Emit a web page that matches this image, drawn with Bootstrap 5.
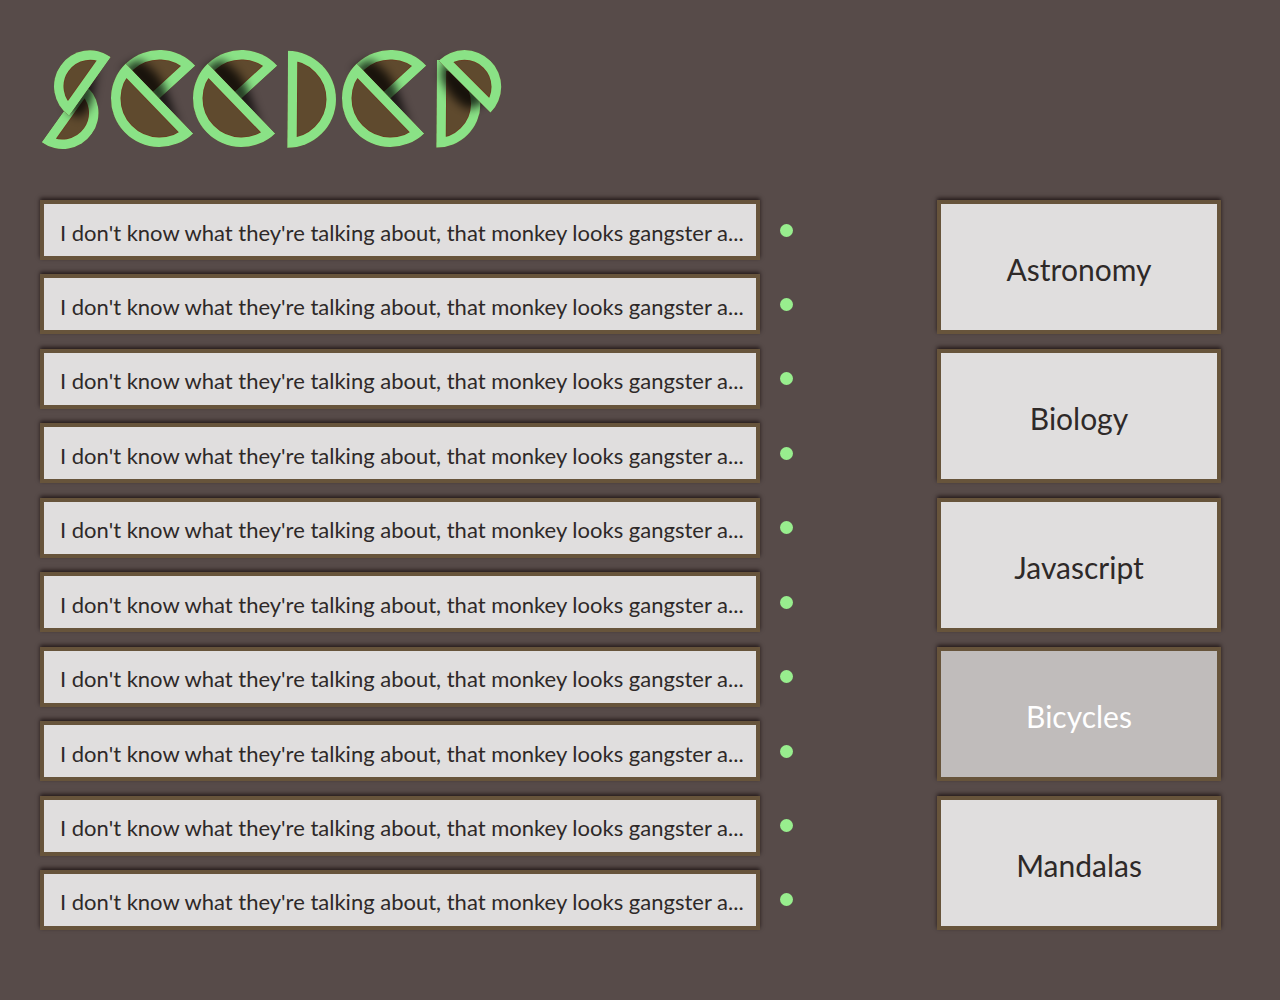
<!DOCTYPE html>
<html lang="en">
<head>
<meta charset="utf-8">
<meta name="viewport" content="width=device-width, initial-scale=1">
<title>Seeder</title>
<link href="https://cdn.jsdelivr.net/npm/bootstrap@5.3.0/dist/css/bootstrap.min.css" rel="stylesheet">
<style>
  body { background: #574b49; color: #2e2928; font-family: Lato, "Gill Sans", sans-serif; }
  .page { padding: 44px 59px 70px 40px; }
  .logo { width: 464px; max-width: 100%; height: auto; }
  .board { display: grid; grid-template-columns: minmax(0, 753fr) 144fr minmax(0, 284fr); margin-top: 46px; }
  .topics { grid-column: 3; gap: 15px; }
  .entry { gap: 20px; }
  .panel { background: #e0dede; border: 4px solid #67543b; color: inherit; box-shadow: 0 -2px 4px rgba(20, 10, 10, .75); }
  .panel:hover { background: #c0bcbb; color: #fff; }
  .headline { height: 60px; padding: 5px 8px 0 16px; font-size: 22px; line-height: 32px; text-decoration: none; min-width: 0; }
  .topic { height: 134px; padding: 4px 8px 0; font-size: 30px; line-height: 40px; }
  .topic.active { background: #c0bcbb; color: #fff; }
  .unread { width: 13px; height: 13px; background: #98ee8e; }
</style>
<script src="https://cdn.jsdelivr.net/npm/bootstrap@5.3.0/dist/js/bootstrap.bundle.min.js"></script>
</head>
<body>
<div class="page">
  <header>
    <a href="#" class="d-block" aria-label="Seeder">
      <svg class="logo d-block" viewBox="40 44 464 110" aria-hidden="true">
        <defs>
          <filter id="soft" x="-50%" y="-100%" width="200%" height="300%"><feGaussianBlur stdDeviation="5"/></filter>
          <path id="bigShape" d="M-48.5 0A48.5 48.5 0 0 1 48.5 0Z"/>
          <path id="midShape" d="M-44 0A44 44 0 0 1 44 0Z"/>
          <path id="smallShape" d="M-36 0A36 36 0 0 1 36 0Z"/>
          <clipPath id="bigClip"><use href="#bigShape"/></clipPath>
          <clipPath id="midClip"><use href="#midShape"/></clipPath>
          <clipPath id="smallClip"><use href="#smallShape"/></clipPath>
          <g id="big" clip-path="url(#bigClip)">
            <use href="#bigShape" fill="#5f4a2e" stroke="#6b3a20" stroke-width="20.5"/>
            <use href="#bigShape" fill="none" stroke="#8ae286" stroke-width="19"/>
          </g>
          <g id="mid" clip-path="url(#midClip)">
            <use href="#midShape" fill="#5f4a2e" stroke="#6b3a20" stroke-width="20.5"/>
            <use href="#midShape" fill="none" stroke="#8ae286" stroke-width="19"/>
          </g>
          <g id="small" clip-path="url(#smallClip)">
            <use href="#smallShape" fill="#5f4a2e" stroke="#6b3a20" stroke-width="20.5"/>
            <use href="#smallShape" fill="none" stroke="#8ae286" stroke-width="19"/>
          </g>
          <g id="letterE">
            <use href="#big" transform="rotate(-42.5)"/>
            <path d="M-36 -6L48 -6L43 12Q22 19 0 10Z" fill="#000" opacity=".74" filter="url(#soft)" transform="rotate(226)"/>
            <use href="#big" transform="rotate(226)"/>
          </g>
        </defs>
        <g transform="translate(62.5 113)"><use href="#small" transform="rotate(125.4)"/></g>
        <g transform="translate(90 86.3)">
          <path d="M-34 -6L22 -6L-4 7Q-20 15 -32 9Z" fill="#000" opacity=".74" filter="url(#soft)" transform="rotate(-54.6)"/>
          <use href="#small" transform="rotate(-54.6)"/>
        </g>
        <use href="#letterE" transform="translate(159.5 98.5)"/>
        <use href="#letterE" transform="translate(241.5 98.5)"/>
        <use href="#big" transform="translate(287.5 99.3) rotate(90.4)"/>
        <use href="#letterE" transform="translate(390.5 98.5)"/>
        <use href="#mid" transform="translate(436.5 103.7) rotate(90.4)"/>
        <g transform="translate(464.5 86.8)">
          <path d="M-34 -6L26 -6L20 12Q4 20 -24 10Z" fill="#000" opacity=".76" filter="url(#soft)" transform="rotate(45)"/>
          <use href="#small" transform="rotate(45) scale(1.02)"/>
        </g>
      </svg>
    </a>
  </header>
  <main class="board">
    <ul class="list-unstyled d-flex flex-column justify-content-between mb-0">
      <li class="entry d-flex align-items-center"><a href="#" class="panel headline flex-grow-1 d-flex align-items-center"><span class="text-truncate">I don't know what they're talking about, that monkey looks gangster a...</span></a><span class="unread rounded-circle flex-shrink-0"></span></li>
      <li class="entry d-flex align-items-center"><a href="#" class="panel headline flex-grow-1 d-flex align-items-center"><span class="text-truncate">I don't know what they're talking about, that monkey looks gangster a...</span></a><span class="unread rounded-circle flex-shrink-0"></span></li>
      <li class="entry d-flex align-items-center"><a href="#" class="panel headline flex-grow-1 d-flex align-items-center"><span class="text-truncate">I don't know what they're talking about, that monkey looks gangster a...</span></a><span class="unread rounded-circle flex-shrink-0"></span></li>
      <li class="entry d-flex align-items-center"><a href="#" class="panel headline flex-grow-1 d-flex align-items-center"><span class="text-truncate">I don't know what they're talking about, that monkey looks gangster a...</span></a><span class="unread rounded-circle flex-shrink-0"></span></li>
      <li class="entry d-flex align-items-center"><a href="#" class="panel headline flex-grow-1 d-flex align-items-center"><span class="text-truncate">I don't know what they're talking about, that monkey looks gangster a...</span></a><span class="unread rounded-circle flex-shrink-0"></span></li>
      <li class="entry d-flex align-items-center"><a href="#" class="panel headline flex-grow-1 d-flex align-items-center"><span class="text-truncate">I don't know what they're talking about, that monkey looks gangster a...</span></a><span class="unread rounded-circle flex-shrink-0"></span></li>
      <li class="entry d-flex align-items-center"><a href="#" class="panel headline flex-grow-1 d-flex align-items-center"><span class="text-truncate">I don't know what they're talking about, that monkey looks gangster a...</span></a><span class="unread rounded-circle flex-shrink-0"></span></li>
      <li class="entry d-flex align-items-center"><a href="#" class="panel headline flex-grow-1 d-flex align-items-center"><span class="text-truncate">I don't know what they're talking about, that monkey looks gangster a...</span></a><span class="unread rounded-circle flex-shrink-0"></span></li>
      <li class="entry d-flex align-items-center"><a href="#" class="panel headline flex-grow-1 d-flex align-items-center"><span class="text-truncate">I don't know what they're talking about, that monkey looks gangster a...</span></a><span class="unread rounded-circle flex-shrink-0"></span></li>
      <li class="entry d-flex align-items-center"><a href="#" class="panel headline flex-grow-1 d-flex align-items-center"><span class="text-truncate">I don't know what they're talking about, that monkey looks gangster a...</span></a><span class="unread rounded-circle flex-shrink-0"></span></li>
    </ul>
    <nav class="topics d-flex flex-column" aria-label="Topics">
      <button type="button" class="panel topic">Astronomy</button>
      <button type="button" class="panel topic">Biology</button>
      <button type="button" class="panel topic">Javascript</button>
      <button type="button" class="panel topic active" aria-current="true">Bicycles</button>
      <button type="button" class="panel topic">Mandalas</button>
    </nav>
  </main>
</div>
</body>
</html>
